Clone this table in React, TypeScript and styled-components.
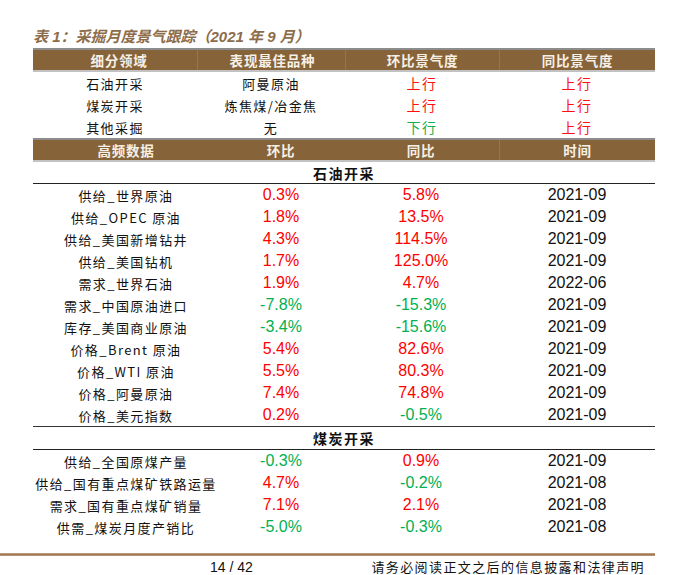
import React from "react";
import styled, { createGlobalStyle } from "styled-components";

const GlobalStyle = createGlobalStyle`
  html, body { margin: 0; padding: 0; background: #ffffff; }
  body { font-family: "Noto Sans CJK SC", "Liberation Sans", sans-serif; }
`;

const Page = styled.div`
  width: 675px;
  height: 575px;
  padding-top: 27px;
  box-sizing: border-box;
  display: flex;
  flex-direction: column;
  overflow: hidden;
`;

const Content = styled.div`
  margin-left: 33px;
  width: 622px;
  display: flex;
  flex-direction: column;
`;

const Title = styled.div`
  height: 20px;
  line-height: 20px;
  margin-bottom: 1px;
  font-family: "Liberation Sans", "Noto Sans CJK SC", sans-serif;
  font-size: 15px;
  font-weight: 700;
  font-style: italic;
  color: #8d6c4a;
  white-space: nowrap;
`;

const Grid = styled.div<{ $cols: string }>`
  display: grid;
  grid-template-columns: ${(p) => p.$cols};
`;

const HeaderRow = styled(Grid)`
  height: 24px;
  box-sizing: border-box;
  background: #866338;
  border-top: 2px solid #8c8c8c;
  border-bottom: 2px solid #c2c2c2;
`;

const HeaderCell = styled.div<{ $pl?: number; $sep?: boolean }>`
  display: flex;
  align-items: center;
  justify-content: center;
  padding-left: ${(p) => p.$pl ?? 0}px;
  border-left: ${(p) => (p.$sep ? "1px solid rgba(255,255,255,0.12)" : "none")};
  font-size: 13.5px;
  font-weight: 700;
  letter-spacing: 0.8px;
  color: #f6f0e6;
  white-space: nowrap;
`;

const Row = styled(Grid)`
  height: 22px;
`;

const Cell = styled.div<{ $pl?: number }>`
  display: flex;
  align-items: center;
  justify-content: center;
  padding-left: ${(p) => p.$pl ?? 0}px;
  white-space: nowrap;
`;

const Label = styled(Cell)`
  font-size: 13px;
  letter-spacing: 1.4px;
  color: #111111;
`;

const Trend = styled(Cell)<{ $up: boolean }>`
  font-size: 14px;
  letter-spacing: 1.5px;
  color: ${(p) => (p.$up ? "#ff1010" : "#10b050")};
`;

const Num = styled(Cell)<{ $tone?: "up" | "down" | "plain" }>`
  font-family: "Liberation Sans", Arial, sans-serif;
  font-size: 16px;
  color: ${(p) =>
    p.$tone === "up" ? "#ff0000" : p.$tone === "down" ? "#00b050" : "#111111"};
`;

const Section = styled.div<{ $top?: boolean }>`
  height: ${(p) => (p.$top ? 24 : 22)}px;
  box-sizing: border-box;
  display: flex;
  align-items: center;
  justify-content: center;
  border-top: ${(p) => (p.$top ? "1px solid #333333" : "none")};
  border-bottom: 1.5px solid #222222;
  font-size: 14px;
  font-weight: 700;
  letter-spacing: 1.5px;
  color: #111111;
`;

const FooterLine = styled.div`
  width: 655px;
  height: 3px;
  margin-top: 15px;
  margin-bottom: 2px;
  flex-shrink: 0;
  background: linear-gradient(#c8a88a, #9d7855 50%, #c0a083);
`;

const Footer = styled.div`
  width: 655px;
  height: 17px;
  flex-shrink: 0;
  display: flex;
  align-items: center;
  line-height: 16px;
`;

const PageNum = styled.div`
  margin-left: 210px;
  font-family: "Liberation Sans", Arial, sans-serif;
  font-size: 14px;
  color: #111111;
`;

const Disclaimer = styled.div`
  margin-left: auto;
  margin-right: 10px;
  font-size: 13px;
  letter-spacing: 1.4px;
  color: #111111;
`;

const T1 = "164px 148px 154px 156px";
const T2 = "186px 124px 156px 156px";

const summary = [
  { a: "石油开采", b: "阿曼原油", c: true, d: true },
  { a: "煤炭开采", b: "炼焦煤/冶金焦", c: true, d: true },
  { a: "其他采掘", b: "无", c: false, d: true },
];

const oil: [string, string, string, string][] = [
  ["供给_世界原油", "0.3%", "5.8%", "2021-09"],
  ["供给_OPEC 原油", "1.8%", "13.5%", "2021-09"],
  ["供给_美国新增钻井", "4.3%", "114.5%", "2021-09"],
  ["供给_美国钻机", "1.7%", "125.0%", "2021-09"],
  ["需求_世界石油", "1.9%", "4.7%", "2022-06"],
  ["需求_中国原油进口", "-7.8%", "-15.3%", "2021-09"],
  ["库存_美国商业原油", "-3.4%", "-15.6%", "2021-09"],
  ["价格_Brent 原油", "5.4%", "82.6%", "2021-09"],
  ["价格_WTI 原油", "5.5%", "80.3%", "2021-09"],
  ["价格_阿曼原油", "7.4%", "74.8%", "2021-09"],
  ["价格_美元指数", "0.2%", "-0.5%", "2021-09"],
];

const coal: [string, string, string, string][] = [
  ["供给_全国原煤产量", "-0.3%", "0.9%", "2021-09"],
  ["供给_国有重点煤矿铁路运量", "4.7%", "-0.2%", "2021-08"],
  ["需求_国有重点煤矿销量", "7.1%", "2.1%", "2021-08"],
  ["供需_煤炭月度产销比", "-5.0%", "-0.3%", "2021-08"],
];

const tone = (v: string) => (v.startsWith("-") ? "down" : "up");

const DataRows = ({ rows }: { rows: [string, string, string, string][] }) => (
  <>
    {rows.map(([name, mom, yoy, date]) => (
      <Row $cols={T2} key={name}>
        <Label>{name}</Label>
        <Num $tone={tone(mom)}>{mom}</Num>
        <Num $tone={tone(yoy)}>{yoy}</Num>
        <Num $tone="plain">{date}</Num>
      </Row>
    ))}
  </>
);

export default function App() {
  return (
    <>
      <GlobalStyle />
      <Page>
        <Content>
          <Title>表 1：采掘月度景气跟踪（2021 年 9 月）</Title>
          <HeaderRow $cols={T1}>
            <HeaderCell $pl={8}>细分领域</HeaderCell>
            <HeaderCell $pl={2} $sep>表现最佳品种</HeaderCell>
            <HeaderCell $sep>环比景气度</HeaderCell>
            <HeaderCell $sep>同比景气度</HeaderCell>
          </HeaderRow>
          {summary.map((r) => (
            <Row $cols={T1} key={r.a}>
              <Label>{r.a}</Label>
              <Label>{r.b}</Label>
              <Trend $up={r.c}>{r.c ? "上行" : "下行"}</Trend>
              <Trend $up={r.d}>{r.d ? "上行" : "下行"}</Trend>
            </Row>
          ))}
          <HeaderRow $cols={T2}>
            <HeaderCell>高频数据</HeaderCell>
            <HeaderCell>环比</HeaderCell>
            <HeaderCell>同比</HeaderCell>
            <HeaderCell $sep>时间</HeaderCell>
          </HeaderRow>
          <Section>石油开采</Section>
          <DataRows rows={oil} />
          <Section $top>煤炭开采</Section>
          <DataRows rows={coal} />
        </Content>
        <FooterLine />
        <Footer>
          <PageNum>14 / 42</PageNum>
          <Disclaimer>请务必阅读正文之后的信息披露和法律声明</Disclaimer>
        </Footer>
      </Page>
    </>
  );
}
